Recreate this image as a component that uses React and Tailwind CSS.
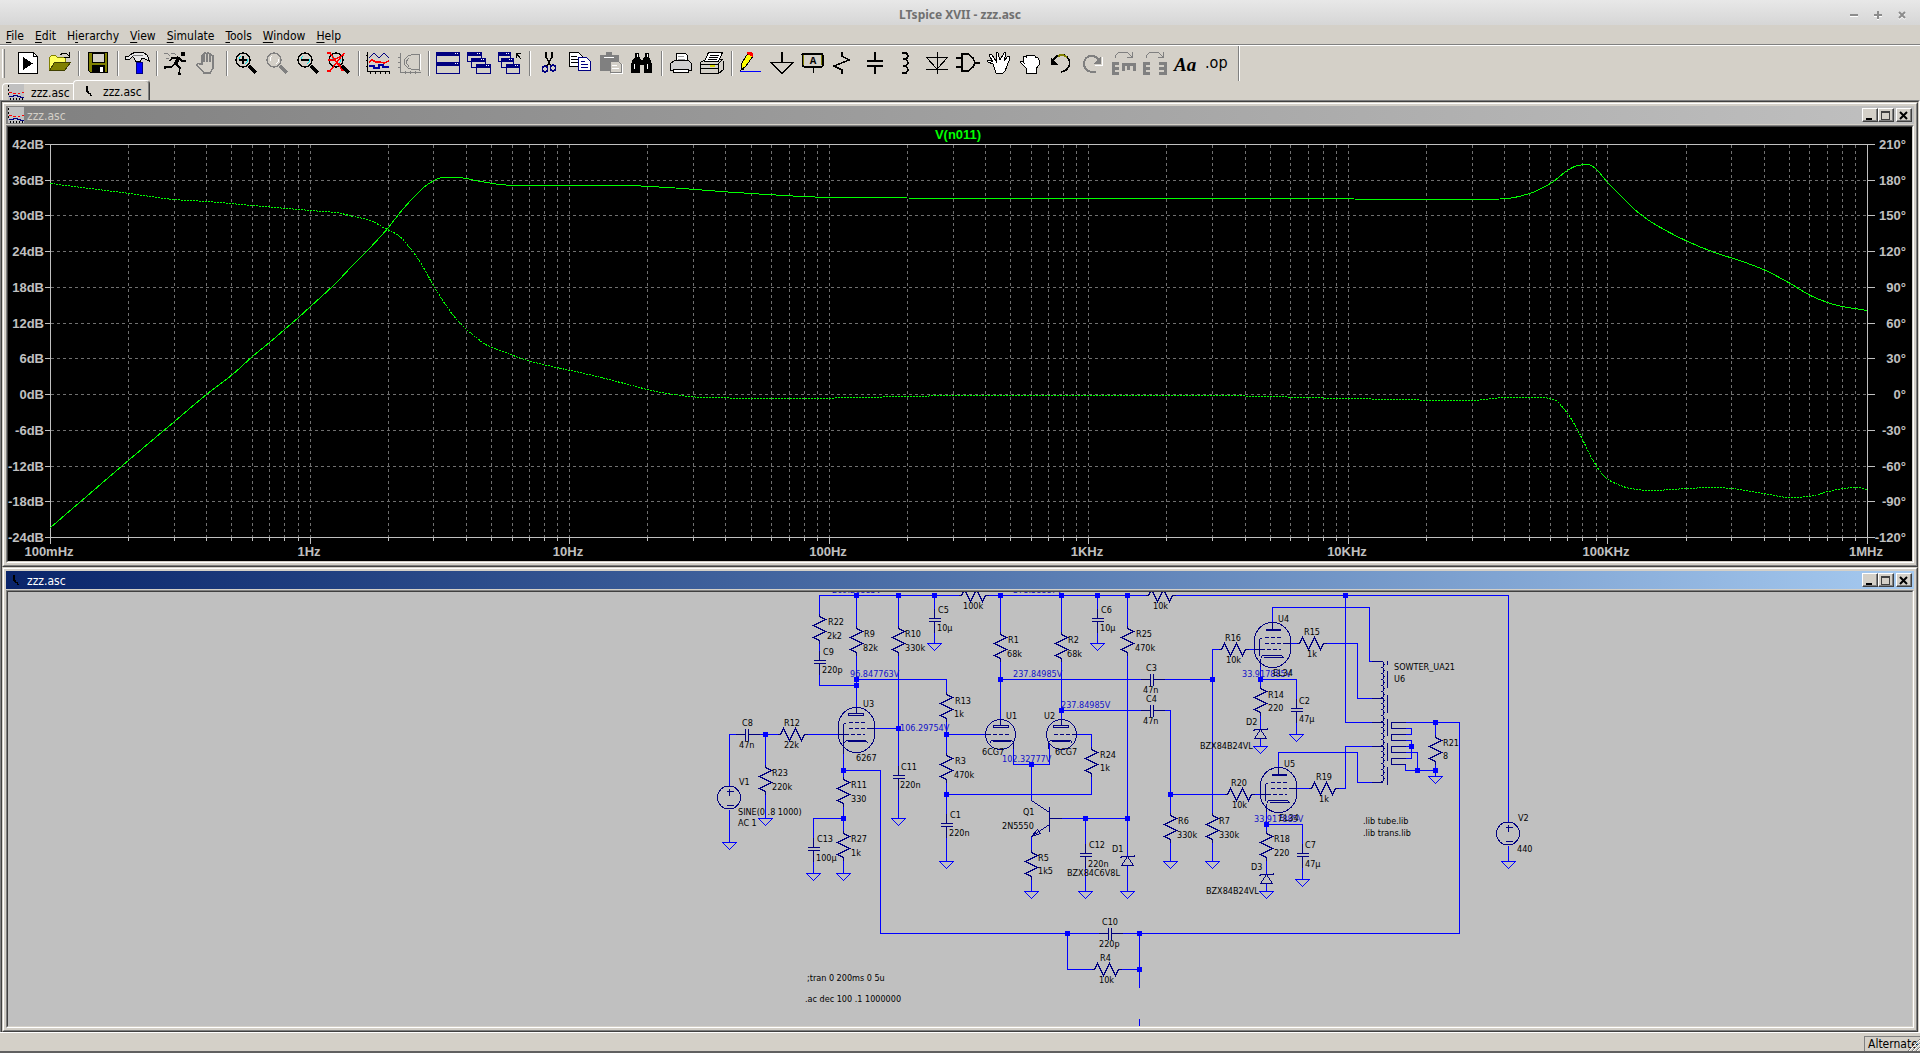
import clsx from 'clsx';

// LTspice XVII workspace: toolbar, document tabs, Bode plot window and schematic window.

const MENUS = ['File', 'Edit', 'Hierarchy', 'View', 'Simulate', 'Tools', 'Window', 'Help'];
const MENU_KEY = { File: 0, Edit: 0, Hierarchy: 1, View: 0, Simulate: 0, Tools: 0, Window: 0, Help: 0 };

/* ---------- toolbar icons, 24 x 24 ---------- */

const Lens = ({ ring = '#000', glass = '#d4d0c8', tint = '#00e5ee' }) => (
  <>
    <path d="M15 14l7 7" stroke={ring} strokeWidth="3" />
    <circle cx="9" cy="8" r="7" fill={glass} stroke={ring} strokeWidth="1.500" />
    <path d="M5 9V6l2-2M13 7v3l-2 2" stroke={tint} fill="none" strokeWidth="1" />
  </>
);

const MiniWindow = ({ x, y, w = 14, h = 9 }) => (
  <>
    <rect x={x + 0.5} y={y + 0.5} width={w} height={h} fill="#d4d0c8" stroke="#000080" />
    <rect x={x} y={y} width={w + 1} height="4" fill="#000080" />
    <path d={`M${x + w - 4} ${y + 1.5}h1m1 0h1`} stroke="#fff" />
  </>
);

const Jump = () => (
  <path d="M4 6V4l4-4h8l5 5M21 0v5h-5" stroke="#808080" fill="none" />
);

const GROUPS = [
  [
    ['Run', (
      <>
        <path d="M2.500.5h15l4 4v17h-19z" fill="#fff" stroke="#000" />
        <path d="M17.500.5v4h4" fill="none" stroke="#000" />
        <path d="M7 5v13l10-6.500z" fill="#000" />
      </>
    )],
    ['Open', (
      <>
        <path d="M2.500 18V5.500l2-2h4l2 2h8v5" fill="#ffff60" stroke="#808000" />
        <path d="M2.500 18.500l5-8h16l-6 8z" fill="#808000" stroke="#404000" />
        <path d="M13 3l3-2h3l3 3M22 0v5h-5" fill="none" stroke="#000" />
      </>
    )],
  ],
  [
    ['Save', (
      <>
        <path d="M2.500.5h19v20h-17l-2-2z" fill="#808000" stroke="#000" />
        <path d="M6 1h12v9H6z" fill="#d4d0c8" stroke="#000" />
        <path d="M6 13h13v8H6z" fill="#000" />
        <path d="M14 15h3v5h-3z" fill="#fff" />
      </>
    )],
  ],
  [
    ['Control Panel', (
      <>
        <path d="M11 10h6v11h-6z" fill="#0000ff" stroke="#000080" />
        <path d="M.5 4.500h3l2-2 4-2h9l4 3 2 6-5-3h-3l-1 3h-5l-1-3-2-2-3 3h-4z" fill="#e8e8e8" stroke="#000" />
        <path d="M8 3h10" stroke="#808080" />
      </>
    )],
  ],
  [
    ['Simulate', (
      <>
        <path d="M17 0h4v4h-4z" fill="#000" />
        <path d="M15 5l-4 8" stroke="#000" strokeWidth="4" />
        <path d="M14 6H8L6 9M15 6l3 3h4M12 12l4 4-1 6h2M11 12l-4 3H1v2" fill="none" stroke="#000" strokeWidth="1.500" />
        <path d="M0 1h3l3 3M7 1h3l2 2M2 6h3" fill="none" stroke="#808080" />
      </>
    )],
    ['Halt', (
      <path
        d="M7 12V4q1-2 2 0v6V2q1-2 3 0v8V2q1-2 3 0v8V4q1-2 3 0v12l-3 5H9l-7-8q1-2 3-1z"
        fill="#d4d0c8" stroke="#808080" strokeWidth="1.500"
      />
    )],
  ],
  [
    ['Zoom In', <><Lens /><path d="M5 8h8M9 4v8" stroke="#000" strokeWidth="2" /></>],
    ['Pan', <Lens ring="#808080" tint="#fff" />],
    ['Zoom Back', <><Lens /><path d="M5 8h8" stroke="#000" strokeWidth="2" /></>],
    ['Zoom Fit', <><Lens /><path d="M0 1h3l13 18M17 1L3 19H0M1 8h5l11-5M12 11l3 8" fill="none" stroke="#f00" strokeWidth="1.500" /></>],
  ],
  [
    ['Autorange', (
      <>
        <path d="M1.500 0v19.500H24M0 3h1m-1 5h1m-1 6h1M4 20v2m5-2v2m5-2v2m5-2v2m4-2v2" fill="none" stroke="#000" />
        <path d="M3 6l5-5 5 5 5-5 5 5" fill="none" stroke="#000080" />
        <path d="M3 10l3-2 4 2h4l4 1 5-2" fill="none" stroke="#f00" strokeWidth="1.500" />
        <path d="M3 14h5v2h5v-3h4v2h6" fill="none" stroke="#0000a0" strokeWidth="1.500" />
      </>
    )],
    ['Smith Chart', (
      <>
        <path d="M3 1v19h21M1 5h3M1 10h3M1 15h3M8 19v3m5-3v3m5-3v3" fill="none" stroke="#808080" />
        <path d="M22 2q-14 0-15 8 1 8 15 8zM12 6l-3 4 3 5" fill="none" stroke="#808080" />
        <path d="M23 2v16" stroke="#fff" />
      </>
    )],
  ],
  [
    ['Tile', <><MiniWindow x={0} y={0} w={23} h={10} /><MiniWindow x={0} y={10} w={23} h={11} /></>],
    ['Cascade', <><MiniWindow x={0} y={0} /><MiniWindow x={4} y={6} /><MiniWindow x={9} y={12} /></>],
    ['Close All', (
      <>
        <MiniWindow x={0} y={0} w={12} /><MiniWindow x={3} y={6} w={12} /><MiniWindow x={8} y={12} w={13} />
        <path d="M18 6V1h5M18 1l5 6" fill="none" stroke="#000" />
      </>
    )],
  ],
  [
    ['Cut', (
      <>
        <path d="M9 0v5l5 9M15 0v5l-5 9" fill="none" stroke="#000" strokeWidth="1.500" />
        <ellipse cx="8" cy="17" rx="2.500" ry="3" fill="none" stroke="#000080" strokeWidth="1.500" />
        <ellipse cx="16" cy="16" rx="2.500" ry="3" fill="none" stroke="#000080" strokeWidth="1.500" />
      </>
    )],
    ['Copy', (
      <>
        <path d="M1.500.5h9l4 4v10h-13z" fill="#fff" stroke="#000" />
        <path d="M3 4h6M3 7h8M3 10h8" stroke="#000" />
        <path d="M10.500 5.500h8l4 4v9h-12z" fill="#fff" stroke="#000080" />
        <path d="M13 9h4M13 12h7M13 15h7" stroke="#000080" />
      </>
    )],
    ['Paste', (
      <>
        <path d="M1 3h6V0h6v3h7v16H1z" fill="#808080" />
        <path d="M5 5h10" stroke="#fff" />
        <path d="M11.500 9.500h8l3 3v8h-11z" fill="#d4d0c8" stroke="#808080" />
        <path d="M13 13h5M13 16h7M23 12v9H12" fill="none" stroke="#fff" />
      </>
    )],
    ['Find', (
      <>
        <path d="M5 1h4v4h1l1 3h2l1-3h1V1h4v4l2 4 1 4v8h-8v-8h-4v8H1v-8l1-4 3-4z" fill="#000" />
        <path d="M7 2v3M17 2v3M4 12v5M17 12v5" stroke="#fff" />
      </>
    )],
  ],
  [
    ['Print', (
      <>
        <path d="M7.500 9V1.500h9l2 2V9" fill="#fff" stroke="#000" />
        <path d="M9 4h6M9 7h7" stroke="#999" />
        <path d="M5.500 8.500h14l3 3v7h-21v-7z" fill="#d0d0d0" stroke="#000" />
        <path d="M4.500 17.500h15v3h-15z" fill="#fff" stroke="#000" />
      </>
    )],
    ['Print Setup', (
      <>
        <path d="M.5 10.500l5-3h17l-4 4v10H.5z" fill="#d4d0c8" stroke="#000" />
        <path d="M18.500 21.500l5-4v-9M.5 12.500h18M.5 16.500h18" fill="none" stroke="#000" />
        <path d="M4.500 9.500l4-9h14l-4 9z" fill="#fff" stroke="#000" />
        <path d="M10 3h9M9 5h9M8 7h9" stroke="#000" />
        <path d="M10 14h5" stroke="#d8d800" strokeWidth="2" />
      </>
    )],
  ],
  [
    ['Wire', (
      <>
        <path d="M1 19.500h21" stroke="#0000ff" />
        <path d="M3 11l6-10 5 3-7 10-5 4z" fill="#ffff00" stroke="#000" />
        <path d="M8 0h4l2 2v3L8 2z" fill="#f00" />
        <path d="M2 14v4h3z" fill="#000" />
      </>
    )],
    ['Ground', <path d="M12 0v10M1 10.500h22l-11 11z" fill="none" stroke="#000" strokeWidth="1.500" />],
    ['Label Net', (
      <>
        <rect x="1.500" y="1.500" width="20" height="13" rx="1" fill="#d4d0c8" stroke="#000" strokeWidth="2" />
        <path d="M2.500 3v10M20.500 3v10" stroke="#808000" />
        <path d="M12 15v6" stroke="#000" />
        <text x="12" y="12" textAnchor="middle" fontSize="11" fontWeight="700" fontFamily="Liberation Mono, monospace">A</text>
      </>
    )],
    ['Resistor', <path d="M10 0v4l7 4L2 14l8 4v4" fill="none" stroke="#000" strokeWidth="1.500" />],
    ['Capacitor', <path d="M12 0v8M12 14v8M4 9h16M4 14h16" fill="none" stroke="#000" strokeWidth="2" />],
    ['Inductor', <path d="M8 1h4q4 3 0 6h-3 3q4 4 0 7h-3 3q4 4 0 7H8" fill="none" stroke="#000" strokeWidth="1.500" />],
    ['Diode', <path d="M12 0v22M1 5h22L12 17zM1 17h22" fill="none" stroke="#000" strokeWidth="1" />],
    ['Component', <path d="M0 6h6M0 15h6M6 2v17h6l5-4 2-4-2-5-5-4zM19 11h5" fill="none" stroke="#000" strokeWidth="1.500" />],
    ['Move', (
      <path
        d="M6 12L1 10q-1-2 2-2l3 2-4-7q1-2 3 0l4 6V1q1-1 2 0l2 7 4-7q2-1 2 1l-2 7 4-5q2 0 2 2l-3 8-2 5-2 2H9z"
        fill="#fff" stroke="#000"
      />
    )],
    ['Drag', (
      <path
        d="M8 16l-6-6q0-2 3 0l1 1-1-6q1-2 3 0V4q1-2 3 0 2-2 4 0 2-1 3 2 3-1 3 2v5l-3 4v4H8z"
        fill="#fff" stroke="#000"
      />
    )],
    ['Undo', (
      <>
        <path d="M3 9l5-5q6-3 10 1 4 4 2 9t-8 6" fill="none" stroke="#000" strokeWidth="1.500" />
        <path d="M9 4q5-2 9 1" fill="none" stroke="#808000" strokeWidth="2" />
        <path d="M2 6v7h7z" fill="#000" />
      </>
    )],
    ['Redo', (
      <>
        <path d="M19 9q-2-5-7-5-7 0-8 7 0 8 8 9h4" fill="none" stroke="#808080" strokeWidth="2" />
        <path d="M21 4v8h-7z" fill="#808080" />
        <path d="M22 5v8h-7" fill="none" stroke="#fff" />
      </>
    )],
    ['Rotate', (
      <>
        <Jump />
        <path d="M8 11H2v10h6M2 16h6M12 19v-7h11v7M17.500 12v6" fill="none" stroke="#808080" strokeWidth="3" />
      </>
    )],
    ['Mirror', (
      <>
        <Jump />
        <path d="M8 11H2v10h6M2 16h6M17 11h6v10h-6M17 16h6" fill="none" stroke="#808080" strokeWidth="3" />
      </>
    )],
    ['Text', <text x="1" y="19" fontSize="19" fontWeight="700" fontStyle="italic" fontFamily="Liberation Serif, serif">Aa</text>],
    ['Directive', <text x="1" y="16" fontSize="16" fontFamily="DejaVu Sans Condensed, sans-serif">.op</text>],
  ],
];

function Toolbar() {
  return (
    <div className="flex h-[35px] shrink-0 items-start">
      <div className="ml-[2px] mr-[8px] mt-[3px] h-[29px] w-[3px] border-l border-r border-l-white border-r-[#808080]" />
      {GROUPS.map((group, g) => (
        <div key={g} className="flex pt-[3px]">
          {g > 0 && <span className="mx-[3px] mt-[2px] h-[25px] w-[2px] border-l border-r border-l-[#808080] border-r-white" />}
          {group.map(([label, art]) => (
            <button key={label} type="button" aria-label={label} className="flex h-[31px] w-[31px] items-start pl-[3px] pt-[3px]">
              <svg width="24" height="24" viewBox="0 0 24 24" className="overflow-visible" shapeRendering="crispEdges">
                {art}
              </svg>
            </button>
          ))}
        </div>
      ))}
      <span className="ml-[6px] h-[35px] w-[2px] border-l border-r border-l-[#808080] border-r-white" />
    </div>
  );
}

/* ---------- window chrome ---------- */

const PlotIcon = () => (
  <svg width="16" height="16" viewBox="0 0 16 16" shapeRendering="crispEdges" className="shrink-0">
    <path d="M0 0h16v16H0z" fill="#c0c0c0" />
    <path d="M0 2h1M0 6h1M0 10h1M2 15h1m2 0h1m2 0h1m2 0h1m2 0h1" stroke="#000" strokeWidth="2" />
    <path d="M1 8.500h3m1 1h3m2 0h2m2-1h2" stroke="#f00" />
    <path d="M1 12.500h4v-1h4v1h3v1h4" fill="none" stroke="#000080" />
  </svg>
);

const SchematicIcon = () => (
  <svg width="16" height="16" viewBox="0 0 16 16" shapeRendering="crispEdges" className="shrink-0">
    <path d="M5.500 3v6M6.500 3v7M7.500 8v2h2v2h1v1" fill="none" stroke="#000" />
  </svg>
);

const CAPTION_BTN =
  'flex h-[14px] w-[16px] items-center justify-center border border-l-white border-t-white border-r-[#404040] border-b-[#404040] bg-[#d4d0c8] shadow-[inset_-1px_-1px_0_#808080]';

function DocWindow({ title, icon, active, children }) {
  return (
    <section className="flex min-h-0 flex-1 flex-col border border-b-[#404040] border-l-[#d4d0c8] border-r-[#404040] border-t-[#d4d0c8] bg-[#d4d0c8]">
      <div className="flex min-h-0 flex-1 flex-col border border-b-[#808080] border-l-white border-r-[#808080] border-t-white p-[2px]">
        <header
          className={clsx(
            'mb-px flex h-[18px] shrink-0 items-center bg-linear-to-r pl-[2px] pr-[2px] text-[12px]',
            active ? 'from-[#0a246a] to-[#a6caf0] text-white' : 'from-[#808080] to-[#c0c0c0] text-[#d4d0c8]',
          )}
        >
          {icon}
          <h2 className="ml-[3px] flex-1 pt-[2px] leading-[18px]">{title}</h2>
          <button type="button" aria-label="Minimize" className={CAPTION_BTN}>
            <svg width="10" height="9" viewBox="0 0 10 9" shapeRendering="crispEdges"><path d="M1 7h6v2H1z" /></svg>
          </button>
          <button type="button" aria-label="Maximize" className={CAPTION_BTN}>
            <svg width="10" height="9" viewBox="0 0 10 9" shapeRendering="crispEdges">
              <path d="M.5.5h8v8h-8zM0 1.500h9" fill="none" stroke="#404040" />
            </svg>
          </button>
          <button type="button" aria-label="Close" className={clsx(CAPTION_BTN, 'ml-[2px]')}>
            <svg width="10" height="9" viewBox="0 0 10 9"><path d="M1 1l7 7M8 1L1 8" stroke="#000" strokeWidth="2" /></svg>
          </button>
        </header>
        <div className="flex min-h-0 flex-1 border border-b-white border-l-[#808080] border-r-white border-t-[#808080]">
          <div className="flex min-h-0 flex-1 border border-b-[#d4d0c8] border-l-[#404040] border-r-[#d4d0c8] border-t-[#404040]">
            {children}
          </div>
        </div>
      </div>
    </section>
  );
}

/* ---------- Bode plot ---------- */

const PLOT = { left: 42, right: 1859, top: 17, bottom: 410 };
const DECADES = ['100mHz', '1Hz', '10Hz', '100Hz', '1KHz', '10KHz', '100KHz', '1MHz'];
const MAGNITUDE = [
  [42, 400], [121, 332], [166, 294], [198, 267], [224, 247], [244, 229], [261, 215], [276, 202], [290, 190], [302, 179],
  [327, 156], [345, 137], [359, 123], [380, 100], [390, 87], [405, 70], [419, 57], [434, 50], [449, 50],
  [472, 54], [492, 57], [506, 58], [616, 58], [659, 60], [727, 65], [825, 70], [972, 71], [1290, 71],
  [1400, 72], [1476, 72], [1499, 71], [1521, 66], [1542, 56], [1559, 43], [1569, 38], [1580, 37], [1588, 42],
  [1599, 55], [1612, 68], [1625, 81], [1642, 94], [1677, 113], [1706, 125], [1731, 133], [1755, 142], [1780, 155],
  [1804, 169], [1829, 178], [1859, 183],
];
const PHASE = [
  [42, 56], [121, 66], [166, 72], [198, 74], [244, 78], [302, 83], [327, 85], [345, 89], [362, 93], [375, 100],
  [390, 108], [405, 125], [412, 135], [425, 158], [439, 180], [449, 193], [459, 203], [469, 211], [477, 217],
  [492, 223], [519, 233], [580, 247], [616, 256], [653, 265], [696, 270], [776, 271], [972, 268], [1192, 268],
  [1339, 271], [1461, 273], [1498, 270], [1532, 270], [1545, 272], [1559, 286], [1572, 308], [1584, 332],
  [1596, 349], [1605, 355], [1622, 361], [1642, 363], [1679, 361], [1705, 360], [1723, 361], [1755, 366],
  [1782, 370], [1800, 369], [1820, 364], [1835, 361], [1849, 360], [1859, 362],
];

// Cubic through every sample; the slope at a sample is flat where the trace turns.
function trace(pts) {
  const slope = pts.map((p, i) => {
    const a = pts[i - 1];
    const b = pts[i + 1];
    if (!a || !b) {
      const [s, e] = a ? [a, p] : [p, b];
      return (e[1] - s[1]) / (e[0] - s[0]);
    }
    const m1 = (p[1] - a[1]) / (p[0] - a[0]);
    const m2 = (b[1] - p[1]) / (b[0] - p[0]);
    return m1 * m2 <= 0 ? 0 : (2 * m1 * m2) / (m1 + m2);
  });
  let d = `M${pts[0].join(' ')}`;
  for (let i = 1; i < pts.length; i++) {
    const [x0, y0] = pts[i - 1];
    const [x1, y1] = pts[i];
    const h = (x1 - x0) / 3;
    d += `C${x0 + h} ${y0 + slope[i - 1] * h} ${x1 - h} ${y1 - slope[i] * h} ${x1} ${y1}`;
  }
  return d;
}

function BodePlot() {
  const { left, right, top, bottom } = PLOT;
  const decade = (right - left) / 7;
  const rows = Array.from({ length: 12 }, (_, i) => ({
    y: Math.round(top + (i * (bottom - top)) / 11),
    db: `${42 - 6 * i}dB`,
    deg: `${210 - 30 * i}°`,
  }));
  const cols = [];
  for (let d = 0; d < 7; d++) {
    for (let m = 2; m <= 10; m++) {
      cols.push({ x: Math.round(left + decade * (d + Math.log10(m))), major: m === 10 });
    }
  }

  return (
    <svg viewBox="0 0 1904 434" className="min-h-0 w-full flex-1 bg-black" role="img" aria-label="V(n011) frequency response">
      <g transform="translate(.5 .5)" fill="none" shapeRendering="crispEdges">
        <g stroke="#707070" strokeDasharray="3 3">
          {cols.slice(0, -1).map((c) => <path key={c.x} d={`M${c.x} ${top}V${bottom}`} />)}
          {rows.slice(1, -1).map((r) => <path key={r.y} d={`M${left} ${r.y}H${right}`} />)}
        </g>
        <g stroke="#c0c0c0">
          <path d={`M${left - 6} ${top}H${right + 7}M${left - 6} ${bottom}H${right + 7}M${left} ${top}V${bottom + 6}M${right} ${top}V${bottom + 6}`} />
          {rows.map((r) => <path key={r.y} d={`M${left - 6} ${r.y}h6M${right} ${r.y}h7`} />)}
          {cols.map((c) => <path key={c.x} d={`M${c.x} ${bottom}v${c.major ? 6 : 3}`} />)}
        </g>
        <path d={trace(MAGNITUDE)} stroke="#00ff00" />
        <path d={trace(PHASE)} stroke="#00ff00" strokeDasharray="2 1" />
      </g>
      <g className="font-bold text-[13px]" fill="#c0c0c0" fontFamily="Liberation Sans, Arial, sans-serif">
        {rows.map((r) => (
          <g key={r.y} textAnchor="end">
            <text x="36" y={r.y + 5}>{r.db}</text>
            <text x="1898" y={r.y + 5}>{r.deg}</text>
          </g>
        ))}
        {DECADES.map((label, i) => (
          <text key={label} x={Math.round(left + i * decade) - 1} y="429" textAnchor="middle">{label}</text>
        ))}
        <text x="950" y="12" textAnchor="middle" fill="#00ff00">V(n011)</text>
      </g>
    </svg>
  );
}

/* ---------- schematic ---------- */

const RES_V = [
  [811, 21], [848, 33], [890, 33], [992, 39], [1053, 39], [938, 99], [938, 160], [757, 172], [835, 184], [835, 238],
  [1023, 257], [1083, 154], [1119, 33], [1252, 93], [1258, 238], [1162, 220], [1204, 220], [1427, 142],
];
const RES_H = [[769, 142], [950, 3], [1137, 3], [1210, 57], [1288, 51], [1216, 202], [1300, 196], [1083, 377]];
const CAP_V = [[926, 16], [1089, 16], [811, 58], [805, 245], [890, 173], [938, 221], [1077, 251], [1288, 106], [1294, 251]];
const CAP_H = [[727, 142], [1132, 87], [1132, 118], [1090, 341]];
const GROUNDS = [
  [721, 250], [757, 226], [805, 281], [835, 281], [890, 226], [926, 51], [938, 269], [1089, 51], [1023, 299],
  [1077, 299], [1119, 299], [1162, 269], [1204, 269], [1252, 154], [1288, 142], [1258, 299], [1294, 287],
  [1427, 184], [1500, 269],
];
const NODES = [
  [848, 3], [890, 3], [926, 3], [992, 3], [1053, 3], [1089, 3], [1119, 3], [1337, 3], [848, 87], [848, 93],
  [757, 142], [890, 136], [938, 142], [938, 202], [835, 178], [835, 226], [992, 87], [1053, 118], [1023, 172],
  [1077, 226], [1119, 226], [1204, 87], [1162, 202], [1252, 87], [1258, 232], [1403, 154], [1409, 178],
  [1427, 178], [1427, 130], [1059, 341], [1131, 341], [1131, 377],
];
const WIRES = [
  'M811 21V3H950M980 3H1137M1167 3H1500V229M1500 253V269',
  'M811 51V58M811 82V93H848M848 3V33M848 63V114M890 3V33M890 63V173M890 197V226',
  'M926 3V16M926 40V51M848 87H938V99M938 129V160M938 190V221M938 245V269',
  'M866 136H890M799 142H829M721 193V142H727M751 142H769M757 142V172M757 202V226M721 217V250',
  'M835 160V184M835 214V238M835 268V281M835 178H872V341H1090M835 226H805V245M805 269V281',
  'M992 3V39M992 69V126M992 87H1132M1156 87H1204M1053 3V39M1053 69V126M1053 118H1132M1156 118H1162V220M1162 250V269',
  'M938 142H977M1068 142H1083V154M1083 184V202H938M1005 150V172H1041V150M1023 172V208M1023 244V257M1023 287V299',
  'M1053 226H1119M1077 226V251M1077 275V299M1119 3V33M1119 63V264M1119 273V299M1089 3V16M1089 40V51',
  'M1210 57H1204V220M1204 250V269M1240 57H1246M1282 51H1288M1318 51H1349V106H1363',
  'M1264 30V15H1361V69H1363M1337 3V130H1363M1330 196H1337V154H1363M1270 175V160H1349V190H1363M1288 196H1300',
  'M1162 202H1216M1246 202H1252M1252 74V93M1252 87H1288V106M1288 130V142M1252 123V137M1252 146V154',
  'M1258 219V238M1258 232H1294V251M1294 275V287M1258 268V282M1258 291V299',
  'M1114 341H1451V130H1397M1059 341V377H1083M1113 377H1131M1131 341V395M1131 426V434',
  'M1397 136H1403V142H1397M1397 148H1403V166H1397M1397 154H1403M1397 160H1409V178M1397 172V178H1427',
  'M1427 130V142M1427 172V184',
];

// text, x, baseline
const LABELS = [
  ['R22', 820, 33], ['2k2', 819, 47], ['C9', 815, 63], ['220p', 814, 81], ['R9', 856, 45], ['82k', 855, 59],
  ['R10', 897, 45], ['330k', 897, 59], ['C5', 930, 21], ['10µ', 929, 39], ['100k', 955, 17], ['R1', 1000, 51],
  ['68k', 999, 65], ['R2', 1060, 51], ['68k', 1059, 65], ['U3', 855, 115], ['R13', 947, 112], ['1k', 946, 125],
  ['C8', 734, 134], ['47n', 731, 156], ['R12', 776, 134], ['22k', 776, 156], ['6267', 848, 169], ['U1', 998, 127],
  ['U2', 1036, 127], ['6CG7', 974, 163], ['6CG7', 1047, 163], ['C11', 893, 178], ['220n', 892, 196],
  ['R3', 947, 172], ['470k', 946, 186], ['R23', 764, 184], ['220k', 764, 198], ['V1', 731, 193],
  ['SINE(0 .8 1000)', 730, 223], ['AC 1', 730, 234], ['R11', 843, 196], ['330', 843, 210], ['C13', 809, 250],
  ['100µ', 808, 269], ['R27', 843, 250], ['1k', 843, 264], ['C1', 942, 226], ['220n', 941, 244], ['Q1', 1015, 223],
  ['2N5550', 994, 237], ['R5', 1030, 269], ['1k5', 1030, 282], ['C12', 1081, 256], ['220n', 1080, 275],
  ['BZX84C6V8L', 1059, 284], ['R24', 1092, 166], ['1k', 1092, 179], ['R25', 1128, 45], ['470k', 1127, 59],
  ['C6', 1093, 21], ['10µ', 1092, 39], ['10k', 1145, 17], ['C3', 1138, 79], ['47n', 1135, 101], ['C4', 1138, 110],
  ['47n', 1135, 132], ['D1', 1104, 260], ['R6', 1170, 232], ['330k', 1169, 246], ['R7', 1211, 232],
  ['330k', 1211, 246], ['R16', 1217, 49], ['10k', 1218, 71], ['U4', 1270, 30], ['R15', 1296, 43], ['1k', 1299, 65],
  ['EL34', 1265, 84], ['R14', 1260, 106], ['220', 1260, 119], ['C2', 1291, 112], ['47µ', 1291, 130],
  ['D2', 1238, 133], ['BZX84B24VL', 1192, 157], ['U5', 1276, 175], ['R20', 1223, 194], ['10k', 1224, 216],
  ['R19', 1308, 188], ['1k', 1311, 210], ['EL34', 1271, 229], ['R18', 1266, 250], ['220', 1266, 264],
  ['C7', 1297, 256], ['47µ', 1297, 275], ['D3', 1243, 278], ['BZX84B24VL', 1198, 302], ['R21', 1435, 154],
  ['8', 1435, 167], ['SOWTER_UA21', 1386, 78], ['U6', 1386, 90], ['.lib tube.lib', 1355, 232],
  ['.lib trans.lib', 1355, 244], ['V2', 1510, 229], ['440', 1509, 260], ['C10', 1094, 333], ['220p', 1091, 355],
  ['R4', 1092, 369], ['10k', 1091, 391], [';tran 0 200ms 0 5u', 799, 389], ['.ac dec 100 .1 1000000', 797, 410],
];
const VOLTAGES = [
  ['269.26885V', 824, 1], ['378.58887V', 1005, 1], ['96.847763V', 842, 85], ['237.84985V', 1005, 85],
  ['106.29754V', 892, 139], ['237.84985V', 1053, 116], ['102.32777V', 994, 170], ['33.917885V', 1234, 85],
  ['33.917885V', 1246, 230],
];

const at = (x, y) => `translate(${x} ${y})`;

// U3 is the small-signal type; `power` draws the output tubes.
const Pentode = ({ x, y, power }) => (
  <g transform={at(x, y)}>
    <rect x="-18" y="-22" width="36" height="45" rx="18" ry="18" />
    {power ? <path d="M0 -22V-15M-7 -15H8M-7 -14H8" /> : <path d="M0 -23V-16M-8 -16H7V-14H-8Z" />}
    <path d="M-8 -7H8M-8 -1H8M-12 5H8" strokeDasharray="4 2" />
    <path d="M10 -1H18M-18 5H-12M-10 -7L-13 -5V11" />
    {power
      ? <path d="M-12 14L-10 11H9L12 14M-9 13H10M-12 14V22" />
      : <path d="M-13 14L-10 11H9L12 14M-9 12H9M-13 11V24" />}
  </g>
);

const Triode = ({ x, y, flip }) => (
  <g transform={at(x, y) + (flip ? ' scale(-1 1)' : '')}>
    <circle r="15" />
    <path d="M0 -16V-9M-7 -9H8V-7H-7Z" />
    <path d="M-15 0H-10" />
    <path d="M-8 0H10" strokeDasharray="4 2" />
    <path d="M-11 9L-9 6H11L13 8V14M-8 7H10" />
  </g>
);

const Source = ({ x, y }) => (
  <g transform={at(x, y)}>
    <circle cx="-.5" r="11.500" />
    <path d="M-3 -6H4M0 -9V-2M-3 8H4" />
  </g>
);

const Zener = ({ x, y }) => (
  <path transform={at(x, y)} d="M-7 2L-6 0H6L8 -1M0 0L-6 9H6Z" />
);

// Tapped primary: twenty lobes between the two outer pins.
const PRIMARY = 'M1374 69' + 'q3 3 0 6h-2h2'.repeat(20);

function Schematic() {
  return (
    <svg viewBox="0 0 1904 434" className="min-h-0 w-full flex-1 bg-[#c0c0c0]" role="img" aria-label="Schematic of the amplifier">
      <g transform="translate(.5 .5)" fill="none" shapeRendering="crispEdges">
        <g stroke="#0000ff">
          {WIRES.map((d) => <path key={d} d={d} />)}
          {GROUNDS.map(([x, y]) => <path key={`${x}-${y}`} d={`M${x - 7} ${y}h14l-7 7z`} />)}
        </g>
        <g stroke="#000080">
          {RES_V.map(([x, y]) => <path key={`${x}-${y}`} transform={at(x, y)} d="M0 0v3l6 3-12 6 12 6-12 6 6 3v3" />)}
          {RES_H.map(([x, y]) => <path key={`${x}-${y}`} transform={at(x, y)} d="M0 0h3l3-6 6 12 6-12 6 12 3-6h3" />)}
          {CAP_V.map(([x, y]) => <path key={`${x}-${y}`} transform={at(x, y)} d="M0 0v10M-6 10h12M-6 13h12M0 13v11" />)}
          {CAP_H.map(([x, y]) => <path key={`${x}-${y}`} transform={at(x, y)} d="M0 0h10M10-6v12M13-6v12M13 0h11" />)}
          <Pentode x={848} y={137} />
          <Pentode x={1264} y={52} power />
          <Pentode x={1270} y={197} power />
          <Triode x={992} y={142} />
          <Triode x={1053} y={142} flip />
          <Source x={721} y={205} />
          <Source x={1500} y={241} />
          <Zener x={1119} y={264} />
          <Zener x={1252} y={137} />
          <Zener x={1258} y={282} />
          {/* Q1 */}
          <path d="M1041 214V239M1041 226H1053M1041 220L1023 208M1041 232L1023 244M1023 244L1029 237L1032 241Z" />
          {/* U6 windings and core */}
          <path d={PRIMARY} />
          <path d="M1363 69H1374M1363 106H1374M1363 130H1374M1363 154H1374M1363 190H1374" />
          <path d="M1379 68v4M1379 78v17M1379 102v18M1379 126v17M1379 150v18M1379 174v18" />
          <path d="M1397 130H1383V136H1397M1397 142H1383V148H1397M1397 154H1383V160H1397M1397 166H1383V172H1397" />
        </g>
      </g>
      <g fill="#0000ff">
        {NODES.map(([x, y]) => <rect key={`${x}-${y}`} x={x - 2} y={y - 2} width="5" height="5" />)}
      </g>
      <g className="whitespace-pre text-[9px] font-medium" fontFamily="DejaVu Sans Condensed, DejaVu Sans, sans-serif">
        {VOLTAGES.map(([t, x, y]) => <text key={`${x}-${y}`} x={x} y={y} fill="#1010c8">{t}</text>)}
        {LABELS.map(([t, x, y]) => <text key={`${x}-${y}`} x={x} y={y} fill="#000">{t}</text>)}
      </g>
    </svg>
  );
}

/* ---------- shell ---------- */

export default function App() {
  return (
    <div className="flex h-screen flex-col overflow-hidden bg-[#d4d0c8] text-[12px] text-black [font-family:'DejaVu_Sans_Condensed','DejaVu_Sans',sans-serif]">
      <header className="grid h-[25px] shrink-0 grid-cols-[1fr_auto_1fr] items-center bg-linear-to-b from-[#e8e8e8] to-[#d6d6d6]">
        <span />
        <h1 className="pt-[4px] font-bold leading-[20px] text-[#707070] [font-family:'Noto_Sans',sans-serif]">LTspice XVII - zzz.asc</h1>
        <div className="flex justify-end gap-[14px] pr-[13px] pt-[4px]">
          {[['Minimize', 'M1 5h8'], ['Maximize', 'M1 5h8M5 1v8'], ['Close', 'M2 2l6 6M8 2l-6 6']].map(([label, d]) => (
            <button key={label} type="button" aria-label={label}>
              <svg width="10" height="10" viewBox="0 0 10 10">
                <path d={d} transform="translate(0 1)" stroke="#fff" strokeWidth="2" />
                <path d={d} stroke="#8c8c8c" strokeWidth="2" />
              </svg>
            </button>
          ))}
        </div>
      </header>

      <nav className="flex h-[21px] shrink-0 items-center gap-[11px] border-b border-b-white pl-[6px] pt-px shadow-[inset_0_-1px_0_#808080]">
        {MENUS.map((name) => {
          const k = MENU_KEY[name];
          return (
            <button key={name} type="button" className="leading-[18px]">
              {name.slice(0, k)}
              <span className="underline underline-offset-2">{name[k]}</span>
              {name.slice(k + 1)}
            </button>
          );
        })}
      </nav>

      <Toolbar />

      <div className="flex h-[19px] shrink-0 items-end pl-[2px]" role="tablist">
        <button type="button" role="tab" aria-selected="false" className="flex h-[17px] w-[71px] items-center overflow-hidden rounded-tl-sm border-l border-t border-white pl-[5px]">
          <PlotIcon />
          <span className="ml-[7px] pt-[2px] leading-[16px]">zzz.asc</span>
        </button>
        <button type="button" role="tab" aria-selected="true" className="flex h-[20px] w-[77px] items-center rounded-t-sm border border-b-0 border-l-white border-r-[#404040] border-t-white pl-[7px] shadow-[inset_-1px_0_0_#808080]">
          <SchematicIcon />
          <span className="ml-[6px] pt-[2px] leading-[16px]">zzz.asc</span>
        </button>
      </div>

      <main className="flex min-h-0 flex-1 flex-col border-l border-r border-t border-l-[#808080] border-r-white border-t-[#808080]">
        <div className="flex min-h-0 flex-1 flex-col border-l border-r border-t border-l-[#404040] border-r-[#d4d0c8] border-t-[#404040]">
          <DocWindow title="zzz.asc" icon={<PlotIcon />}>
            <BodePlot />
          </DocWindow>
          <DocWindow title="zzz.asc" icon={<SchematicIcon />} active>
            <Schematic />
          </DocWindow>
        </div>
      </main>

      <footer className="flex h-[21px] shrink-0 justify-end border-b-2 border-t border-b-[#606060] border-t-white pt-[3px]">
        <div className="relative w-[56px] overflow-hidden border-l border-t border-[#808080] pl-[3px] leading-[15px]">
          Alternate
          <svg width="12" height="12" viewBox="0 0 12 12" className="absolute bottom-0 right-0">
            <path d="M0 12L12 0M4 12l8-8M8 12l4-4" stroke="#808080" />
            <path d="M1 12L12 1M5 12l7-7M9 12l3-3" stroke="#fff" />
          </svg>
        </div>
      </footer>
    </div>
  );
}
